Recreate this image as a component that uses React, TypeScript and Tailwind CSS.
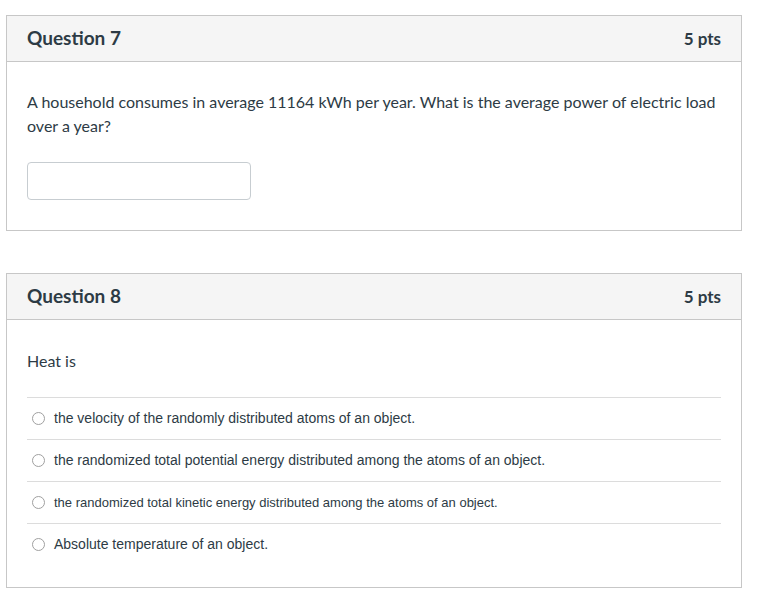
import { useState } from "react";

const answers = [
  { text: "the velocity of the randomly distributed atoms of an object.", size: "text-[14px]" },
  { text: "the randomized total potential energy distributed among the atoms of an object.", size: "text-[14px]" },
  { text: "the randomized total kinetic energy distributed among the atoms of an object.", size: "text-[13px]" },
  { text: "Absolute temperature of an object.", size: "text-[14px]" },
];

function Header({ title, pts }: { title: string; pts: string }) {
  return (
    <div className="h-[46px] flex items-center justify-between px-[20px] bg-[#f5f5f5] border-b border-[#c7c7c7]">
      <h2 className="text-[19px] font-bold text-[#2d3b45]">{title}</h2>
      <span className="text-[17px] font-bold text-[#2d3b45]">{pts}</span>
    </div>
  );
}

export default function App() {
  const [value, setValue] = useState("");
  const [choice, setChoice] = useState<number | null>(null);

  return (
    <div className="w-[760px] h-[591px] bg-white pt-[15px] pl-[6px] font-['Lato','Noto_Sans',sans-serif] text-[#2d3b45]">
      {/* Question 7 */}
      <div className="w-[736px] border border-[#c7c7c7]">
        <Header title="Question 7" pts="5 pts" />
        <div className="px-[20px] pt-[28px] pb-[30px]">
          <p className="text-[16px] leading-[24px]">
            A household consumes in average 11164 kWh per year. What is the average power of electric load over a year?
          </p>
          <input
            type="text"
            value={value}
            onChange={(e) => setValue(e.target.value)}
            className="mt-[24px] block w-[224px] h-[38px] border border-[#c7cdd1] rounded-[4px] px-2 outline-none"
          />
        </div>
      </div>

      {/* Question 8 */}
      <div className="w-[736px] border border-[#c7c7c7] mt-[42px]">
        <Header title="Question 8" pts="5 pts" />
        <div className="px-[20px] pt-[29px] pb-[22px]">
          <p className="text-[16px] leading-[24px]">Heat is</p>
          <div className="mt-[24px]">
            {answers.map((a, i) => (
              <label
                key={i}
                className="flex items-center h-[42px] border-t border-[#dcdcdc] cursor-pointer"
              >
                <span
                  onClick={() => setChoice(i)}
                  className="w-[13px] h-[13px] ml-[5px] rounded-full border border-[#a0a0a0] bg-white flex items-center justify-center"
                >
                  {choice === i && <span className="w-[7px] h-[7px] rounded-full bg-[#2d3b45]" />}
                </span>
                <span className={`ml-[9px] ${a.size} font-['Liberation_Sans',Arial,sans-serif] text-[#2d3b45]`}>
                  {a.text}
                </span>
              </label>
            ))}
          </div>
        </div>
      </div>
    </div>
  );
}
